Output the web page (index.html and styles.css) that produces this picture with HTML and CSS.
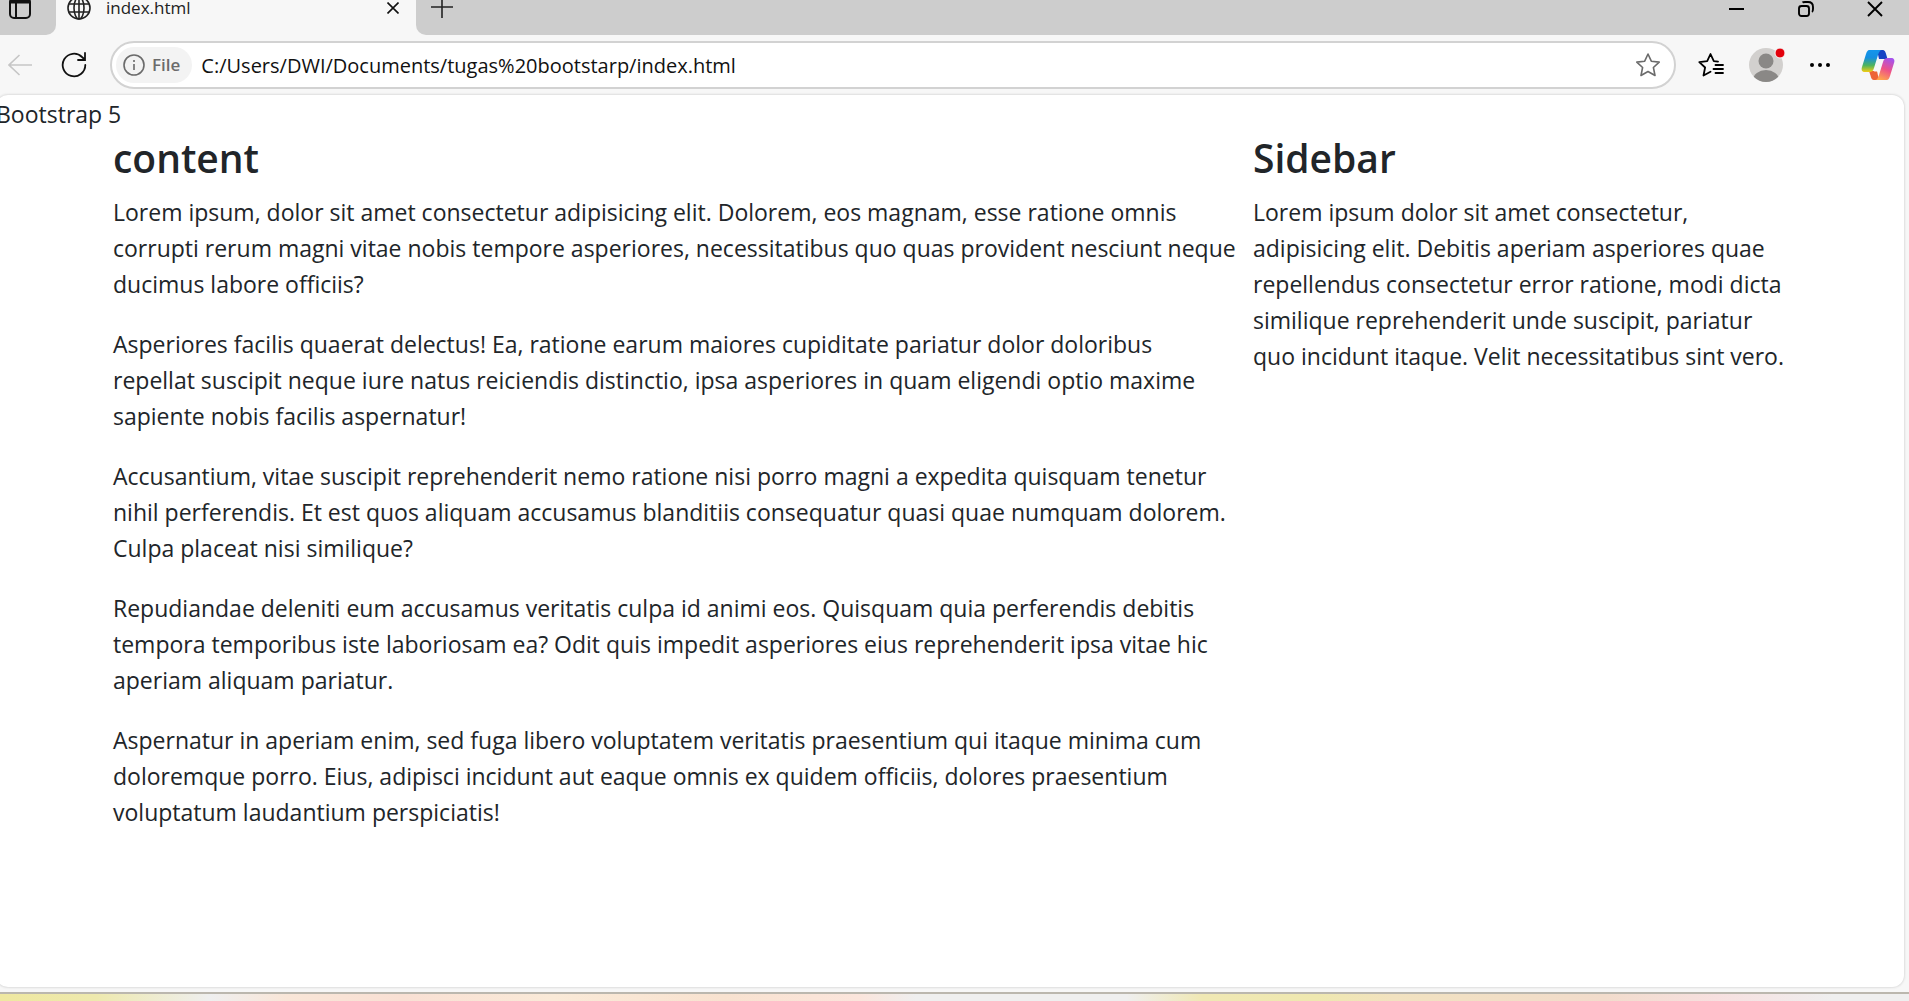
FILE: index.html
```html
<!DOCTYPE html>
<html lang="en">
<head>
<meta charset="utf-8">
<title>index.html</title>
<link rel="stylesheet" href="styles.css">
</head>
<body>
<header class="tabstrip">
  <button class="tab-actions" aria-label="Tab actions">
    <svg width="22" height="22" viewBox="0 0 22 22" fill="none" stroke="#111" stroke-width="2"><rect x="1" y="1" width="20" height="20" rx="4"/><path d="M1 4.500h20" stroke-width="4"/><path d="M7 6v15"/></svg>
  </button>
  <div class="tab">
    <svg width="24" height="24" viewBox="0 0 24 24" fill="none" stroke="#222" stroke-width="1.6"><circle cx="12" cy="12" r="11"/><ellipse cx="12" cy="12" rx="5" ry="11"/><path d="M12 1v22M2 8h20M2 16h20"/></svg>
    <span class="tab-title">index.html</span>
    <button class="icon-button tab-close" aria-label="Close tab">
      <svg width="12" height="12" viewBox="0 0 12 12" stroke="#111" stroke-width="1.6"><path d="M.5.5l11 11M11.500.5l-11 11"/></svg>
    </button>
  </div>
  <div class="strip-rest">
    <button class="icon-button new-tab" aria-label="New tab">
      <svg width="22" height="22" viewBox="0 0 22 22" stroke="#222" stroke-width="1.6"><path d="M11 0v22M0 11h22"/></svg>
    </button>
    <div class="window-controls">
      <button class="icon-button" aria-label="Minimize"><svg width="16" height="16" viewBox="0 0 16 16" stroke="#000" stroke-width="2"><path d="M0 8h15"/></svg></button>
      <button class="icon-button" aria-label="Restore"><svg width="16" height="16" viewBox="0 0 16 16" fill="none" stroke="#000" stroke-width="1.9"><rect x="1" y="5" width="10" height="10" rx="2.500"/><path d="M4.500 1.500C5 1 6 1 7 1h3c3 0 5 2 5 5v2c0 1.500-.2 2.500-1 3"/></svg></button>
      <button class="icon-button" aria-label="Close"><svg width="16" height="16" viewBox="0 0 16 16" stroke="#000" stroke-width="1.9"><path d="M1 1l14 14M15 1L1 15"/></svg></button>
    </div>
  </div>
</header>
<nav class="toolbar">
  <button class="icon-button" aria-label="Back" disabled>
    <svg width="24" height="22" viewBox="0 0 24 22" fill="none" stroke="#c6c6c6" stroke-width="1.600"><path d="M24 11H1M11.500 1L1 11l10.500 10"/></svg>
  </button>
  <button class="icon-button reload" aria-label="Refresh">
    <svg width="26" height="26" viewBox="0 0 26 26" fill="none" stroke="#111" stroke-width="1.800" stroke-linecap="round"><path d="M24.300 13A11.300 11.300 0 1 1 21 5l2.700 2.500M24 1v7h-7"/></svg>
  </button>
  <div class="address">
    <button class="chip">
      <svg width="22" height="22" viewBox="0 0 22 22" fill="none" stroke="#6b6b6b" stroke-width="1.600"><circle cx="11" cy="11" r="10"/><path d="M11 10v6M11 6v2"/></svg>
      File
    </button>
    <input class="url" type="text" aria-label="Address" value="C:/Users/DWI/Documents/tugas%20bootstarp/index.html">
    <button class="icon-button" aria-label="Add to favorites">
      <svg width="24" height="24" viewBox="0 0 24 24" fill="none" stroke="#6b6b6b" stroke-width="1.600" stroke-linejoin="round"><path d="M12 1l3.300 7.200 7.900.9-5.800 5.400 1.600 8-7-4-7 4 1.600-8L.8 9.100l7.900-.9z"/></svg>
    </button>
  </div>
  <div class="tools">
    <button class="icon-button" aria-label="Favorites">
      <svg width="26" height="24" viewBox="0 0 26 24" fill="none" stroke="#000" stroke-width="1.800" stroke-linejoin="round" stroke-linecap="round"><path d="M20 8.600l-4.200-.4L12.500 1 9.200 8.200 1.300 9.100l5.800 5.400-1.600 8 7-3.800M17.500 12h7.500M15.500 16h9.500M17.500 20h7.500"/></svg>
    </button>
    <button class="icon-button" aria-label="Profile">
      <svg width="36" height="36" viewBox="0 0 36 36"><defs><clipPath id="face"><circle cx="17" cy="18" r="17"/></clipPath></defs><circle cx="17" cy="18" r="17" fill="#d2d0ce"/><g clip-path="url(#face)" fill="#8a8886"><circle cx="17" cy="14" r="7.500"/><ellipse cx="17" cy="33" rx="13" ry="10"/></g><circle cx="31" cy="6" r="5" fill="#e3000b" stroke="#f7f7f7" stroke-width="1"/></svg>
    </button>
    <button class="icon-button" aria-label="Settings and more">
      <svg width="26" height="4" viewBox="0 0 26 4"><circle cx="2" cy="2" r="2"/><circle cx="10" cy="2" r="2"/><circle cx="18" cy="2" r="2"/></svg>
    </button>
    <button class="icon-button" aria-label="Copilot">
      <svg width="34" height="32" viewBox="0 0 34 32">
        <defs>
          <linearGradient id="cool" x1="0" y1="0" x2="0" y2="1"><stop offset="0" stop-color="#1495ec"/><stop offset=".35" stop-color="#158fe0"/><stop offset=".7" stop-color="#4fb45c"/><stop offset="1" stop-color="#f3cd13"/></linearGradient>
          <linearGradient id="warm" x1=".7" y1="0" x2=".3" y2="1"><stop offset="0" stop-color="#a653ec"/><stop offset=".5" stop-color="#ee5288"/><stop offset="1" stop-color="#ffa84b"/></linearGradient>
        </defs>
        <path d="M16 1h5c3 0 3.500 2 4.200 4.500L26.500 10H18z" fill="#1744c4"/>
        <path d="M18 31h-5c-2 0-3-2-3.500-4.500L8 22h8z" fill="#ed6436"/>
        <path d="M8 1h13c-2 0-3 2-4 5l-4 13c-1 3-2 4-5 4H4c-3 0-4-2-3-5L5 5c1-3 2-4 3-4z" fill="url(#cool)"/>
        <path d="M26 31H14c2 0 3-2 4-5l4-13c1-3 2-4 5-4h3c3 0 4 2 3 5l-4 13c-1 3-2 4-3 4z" fill="url(#warm)"/>
        <path d="M19 10h3.500c-.8 1-1.200 2-1.700 3.500L18 22.500h-5c.8-1 1.200-2 1.600-3.300l2-6.500c.5-1.700 1-2.700 2.400-2.700z" fill="#f7f7f7"/>
      </svg>
    </button>
  </div>
</nav>
<main class="sheet">
  <div>Bootstrap 5</div>
  <div class="container">
    <section class="content">
      <h1>content</h1>
      <p>Lorem ipsum, dolor sit amet consectetur adipisicing elit. Dolorem, eos magnam, esse ratione omnis corrupti rerum magni vitae nobis tempore asperiores, necessitatibus quo quas provident nesciunt neque ducimus labore officiis?</p>
      <p>Asperiores facilis quaerat delectus! Ea, ratione earum maiores cupiditate pariatur dolor doloribus repellat suscipit neque iure natus reiciendis distinctio, ipsa asperiores in quam eligendi optio maxime sapiente nobis facilis aspernatur!</p>
      <p>Accusantium, vitae suscipit reprehenderit nemo ratione nisi porro magni a expedita quisquam tenetur nihil perferendis. Et est quos aliquam accusamus blanditiis consequatur quasi quae numquam dolorem. Culpa placeat nisi similique?</p>
      <p>Repudiandae deleniti eum accusamus veritatis culpa id animi eos. Quisquam quia perferendis debitis tempora temporibus iste laboriosam ea? Odit quis impedit asperiores eius reprehenderit ipsa vitae hic aperiam aliquam pariatur.</p>
      <p>Aspernatur in aperiam enim, sed fuga libero voluptatem veritatis praesentium qui itaque minima cum doloremque porro. Eius, adipisci incidunt aut eaque omnis ex quidem officiis, dolores praesentium voluptatum laudantium perspiciatis!</p>
    </section>
    <aside class="sidebar">
      <h1>Sidebar</h1>
      <p>Lorem ipsum dolor sit amet consectetur, adipisicing elit. Debitis aperiam asperiores quae repellendus consectetur error ratione, modi dicta similique reprehenderit unde suscipit, pariatur quo incidunt itaque. Velit necessitatibus sint vero.</p>
    </aside>
  </div>
</main>
<footer class="desktop-edge"></footer>
</body>
</html>
```
FILE: styles.css
```css
* { box-sizing: border-box; }

body {
  margin: 0;
  min-height: 100vh;
  display: flex;
  flex-direction: column;
  overflow-x: hidden;
  background: #f7f7f7;
  color: #212529;
  font-family: "Open Sans", "Noto Sans", sans-serif;
  font-size: 23px;
  line-height: 36px;
}

button {
  padding: 0;
  border: 0;
  background: none;
  font: inherit;
  color: inherit;
}

svg { display: block; flex: none; }

.icon-button {
  display: flex;
  align-items: center;
  justify-content: center;
}

/* Tab strip */
.tabstrip {
  display: flex;
  height: 35px;
  overflow: hidden;
}

.tab-actions,
.strip-rest {
  display: flex;
  background: #cdcdcd;
}

.tab-actions {
  width: 56px;
  height: 35px;
  padding-left: 9px;
  align-items: flex-start;
  border-radius: 0 0 10px 0;
}

.tab-actions svg { margin-top: -3px; }

.tab {
  width: 360px;
  height: 16px;
  padding: 0 17px 0 11px;
  display: flex;
  align-items: center;
  gap: 15px;
}

.tab-title {
  color: #222;
  font-size: 17px;
}

.tab-close { margin-left: auto; }

.strip-rest {
  flex: 1;
  padding-left: 15px;
  justify-content: space-between;
  border-radius: 0 0 0 10px;
}

.new-tab { height: 14px; }

.window-controls {
  display: flex;
  height: 18px;
}

.window-controls .icon-button { width: 69px; }

/* Toolbar */
.toolbar {
  display: flex;
  align-items: center;
  height: 60px;
  padding: 0 14px 0 8px;
}

.reload { margin: 0 23px 0 29px; }

.address {
  flex: 1;
  height: 48px;
  padding: 0 14px 0 4px;
  display: flex;
  align-items: center;
  gap: 9px;
  border: 2px solid #d2d2d2;
  border-radius: 24px;
  background: #fff;
}

.chip {
  height: 36px;
  padding: 0 12px 0 7px;
  display: flex;
  align-items: center;
  gap: 7px;
  border-radius: 18px;
  background: #f3f3f3;
  color: #6b6b6b;
  font-size: 17px;
  font-weight: 600;
}

.url {
  flex: 1;
  min-width: 0;
  padding: 0;
  border: 0;
  outline: 0;
  background: none;
  color: #111;
  font-family: inherit;
  font-size: 20px;
}

.tools {
  margin-left: 22px;
  display: flex;
  align-items: center;
  gap: 25px;
}

/* Page area */
.sheet {
  flex: 1;
  margin: 0 5px 5px -4px;
  padding-top: 1px;
  border-radius: 12px;
  background: #fff;
  box-shadow: 0 0 2px 1px #dedede;
}

.container {
  max-width: 1710px;
  margin: 0 auto;
  padding: 0 18px;
  display: grid;
  grid-template-columns: 1fr 534px;
  column-gap: 15px;
}

h1 {
  margin: 0 0 12px;
  font-size: 39px;
  font-weight: 600;
  line-height: 52px;
}

p { margin: 0 0 24px; }

h1 + p { margin-top: -2px; }

.desktop-edge {
  height: 9px;
  border-top: 2px solid #bbb7ae;
  background: linear-gradient(90deg, #efe8a0 0, #eee9ae 5%, #efefef 11%, #f9e6d8 15%, #f9e0d4 21%, #faead8 29%, #f8e2d0 38%, #fbe5dc 45%, #efefef 48%, #efefef 59%, #f0e8b4 63%, #efe8b0 69%, #f2e2c0 73%, #f2dccc 84%, #f7e0e0 90%, #efefef 96%);
}
```
